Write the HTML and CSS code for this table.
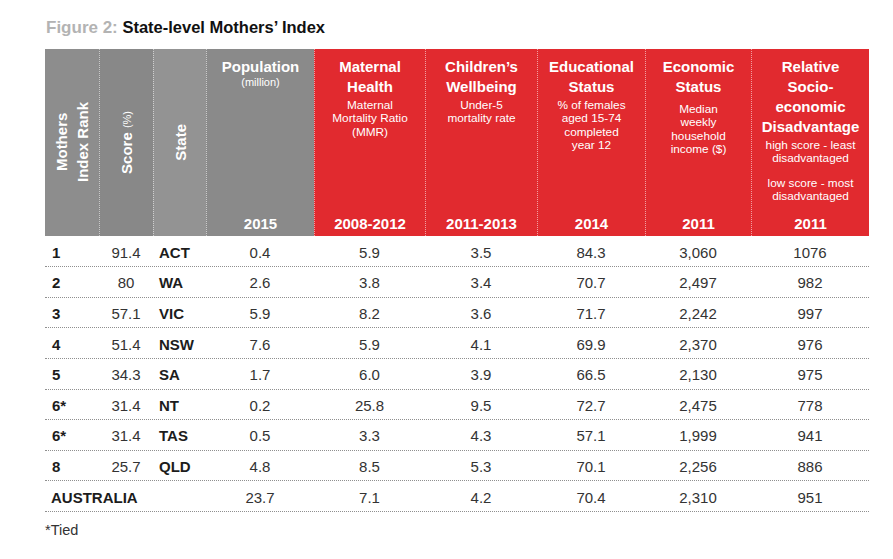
FILE: index.html
```html
<!DOCTYPE html>
<html>
<head>
<meta charset="utf-8">
<link rel="stylesheet" href="styles.css">
</head>
<body>
<h1 class="title"><span class="fig">Figure 2:</span> State-level Mothers’ Index</h1>
<div class="table">
  <div class="thead">
    <div class="th g1 vert"><span class="vtext">Mothers<br>Index Rank</span></div>
    <div class="th g2 vert"><span class="vtext">Score <small>(%)</small></span></div>
    <div class="th g3 vert"><span class="vtext">State</span></div>
    <div class="th g4">
      <div class="ht">Population</div>
      <div class="sub pop">(million)</div>
      <div class="yr">2015</div>
    </div>
    <div class="th red">
      <div class="ht">Maternal<br>Health</div>
      <div class="sub">Maternal<br>Mortality Ratio<br>(MMR)</div>
      <div class="yr">2008-2012</div>
    </div>
    <div class="th red">
      <div class="ht">Children’s<br>Wellbeing</div>
      <div class="sub">Under-5<br>mortality rate</div>
      <div class="yr">2011-2013</div>
    </div>
    <div class="th red">
      <div class="ht">Educational<br>Status</div>
      <div class="sub">% of females<br>aged 15-74<br>completed<br>year 12</div>
      <div class="yr">2014</div>
    </div>
    <div class="th red">
      <div class="ht">Economic<br>Status</div>
      <div class="sub econ">Median<br>weekly<br>household<br>income ($)</div>
      <div class="yr">2011</div>
    </div>
    <div class="th red">
      <div class="ht">Relative<br>Socio-<br>economic<br>Disadvantage</div>
      <div class="sub">high score - least<br>disadvantaged</div>
      <div class="sub gap">low score - most<br>disadvantaged</div>
      <div class="yr">2011</div>
    </div>
  </div>

  <div class="row first"><div class="rank">1</div><div class="num">91.4</div><div class="state">ACT</div><div class="num">0.4</div><div class="num">5.9</div><div class="num">3.5</div><div class="num">84.3</div><div class="num">3,060</div><div class="num">1076</div></div>
  <div class="row"><div class="rank">2</div><div class="num">80</div><div class="state">WA</div><div class="num">2.6</div><div class="num">3.8</div><div class="num">3.4</div><div class="num">70.7</div><div class="num">2,497</div><div class="num">982</div></div>
  <div class="row"><div class="rank">3</div><div class="num">57.1</div><div class="state">VIC</div><div class="num">5.9</div><div class="num">8.2</div><div class="num">3.6</div><div class="num">71.7</div><div class="num">2,242</div><div class="num">997</div></div>
  <div class="row"><div class="rank">4</div><div class="num">51.4</div><div class="state">NSW</div><div class="num">7.6</div><div class="num">5.9</div><div class="num">4.1</div><div class="num">69.9</div><div class="num">2,370</div><div class="num">976</div></div>
  <div class="row"><div class="rank">5</div><div class="num">34.3</div><div class="state">SA</div><div class="num">1.7</div><div class="num">6.0</div><div class="num">3.9</div><div class="num">66.5</div><div class="num">2,130</div><div class="num">975</div></div>
  <div class="row"><div class="rank">6*</div><div class="num">31.4</div><div class="state">NT</div><div class="num">0.2</div><div class="num">25.8</div><div class="num">9.5</div><div class="num">72.7</div><div class="num">2,475</div><div class="num">778</div></div>
  <div class="row"><div class="rank">6*</div><div class="num">31.4</div><div class="state">TAS</div><div class="num">0.5</div><div class="num">3.3</div><div class="num">4.3</div><div class="num">57.1</div><div class="num">1,999</div><div class="num">941</div></div>
  <div class="row"><div class="rank">8</div><div class="num">25.7</div><div class="state">QLD</div><div class="num">4.8</div><div class="num">8.5</div><div class="num">5.3</div><div class="num">70.1</div><div class="num">2,256</div><div class="num">886</div></div>
  <div class="row"><div class="rank total">AUSTRALIA</div><div class="num">23.7</div><div class="num">7.1</div><div class="num">4.2</div><div class="num">70.4</div><div class="num">2,310</div><div class="num">951</div></div>
</div>
<p class="note">*Tied</p>
</body>
</html>
```

FILE: styles.css
```css
html, body {
  margin: 0;
  padding: 0;
  background: #ffffff;
}

body {
  font-family: "Liberation Sans", Arial, sans-serif;
  padding: 17px 0 0 45px;
  color: #1a1a1a;
}

.title {
  margin: 0 0 11px 1px;
  font-size: 16.5px;
  line-height: 20px;
  font-weight: bold;
  color: #111111;
}

.fig {
  color: #b3b3b3;
  font-size: 17px;
}

.table {
  width: 824px;
}

.thead,
.row {
  display: grid;
  grid-template-columns: 54px 54px 53px 108px 111px 112px 108px 106px 118px;
}

.thead {
  height: 187px;
}

.th {
  display: flex;
  flex-direction: column;
  align-items: center;
  text-align: center;
  color: #ffffff;
  padding: 8px 2px 2px;
  box-sizing: border-box;
  border-left: 1px dotted rgba(255, 255, 255, 0.55);
}

.th.g1 {
  background: #8d8d8d;
  border-left: none;
}

.th.g2 {
  background: #888888;
}

.th.g3 {
  background: #939393;
}

.th.g4 {
  background: #8a8a8a;
}

.th.red {
  background: #e12a2f;
}

.th.vert {
  justify-content: center;
  padding: 0;
}

.vtext {
  writing-mode: vertical-rl;
  transform: rotate(180deg);
  font-size: 15px;
  font-weight: bold;
  line-height: 21px;
  text-align: center;
}

.vtext small {
  font-size: 11px;
  font-weight: normal;
}

.ht {
  font-size: 15px;
  font-weight: bold;
  line-height: 20px;
}

.sub {
  font-size: 11.8px;
  line-height: 13.4px;
  margin-top: 2px;
}

.sub.pop {
  font-size: 11px;
  line-height: 12px;
  margin-top: -1px;
}

.sub.econ {
  margin-top: 6px;
}

.sub.gap {
  margin-top: 11px;
}

.yr {
  margin-top: auto;
  font-size: 15px;
  font-weight: bold;
  line-height: 20px;
}

.row {
  height: 30.625px;
  box-sizing: border-box;
  border-bottom: 1px dotted #8f8f8f;
  align-items: center;
  font-size: 15px;
}

.row.first {
  height: 31px;
}

.row > div {
  padding-top: 2px;
}

.rank {
  font-weight: bold;
  color: #1c1c1c;
  padding-left: 7px;
}

.rank.total {
  grid-column: 1 / span 3;
  padding-left: 6px;
}

.state {
  font-weight: bold;
  color: #1c1c1c;
  padding-left: 6px;
}

.num {
  text-align: center;
  color: #333333;
}

.note {
  margin: 9px 0 0;
  font-size: 14.5px;
  line-height: 18px;
  color: #333333;
}
```
